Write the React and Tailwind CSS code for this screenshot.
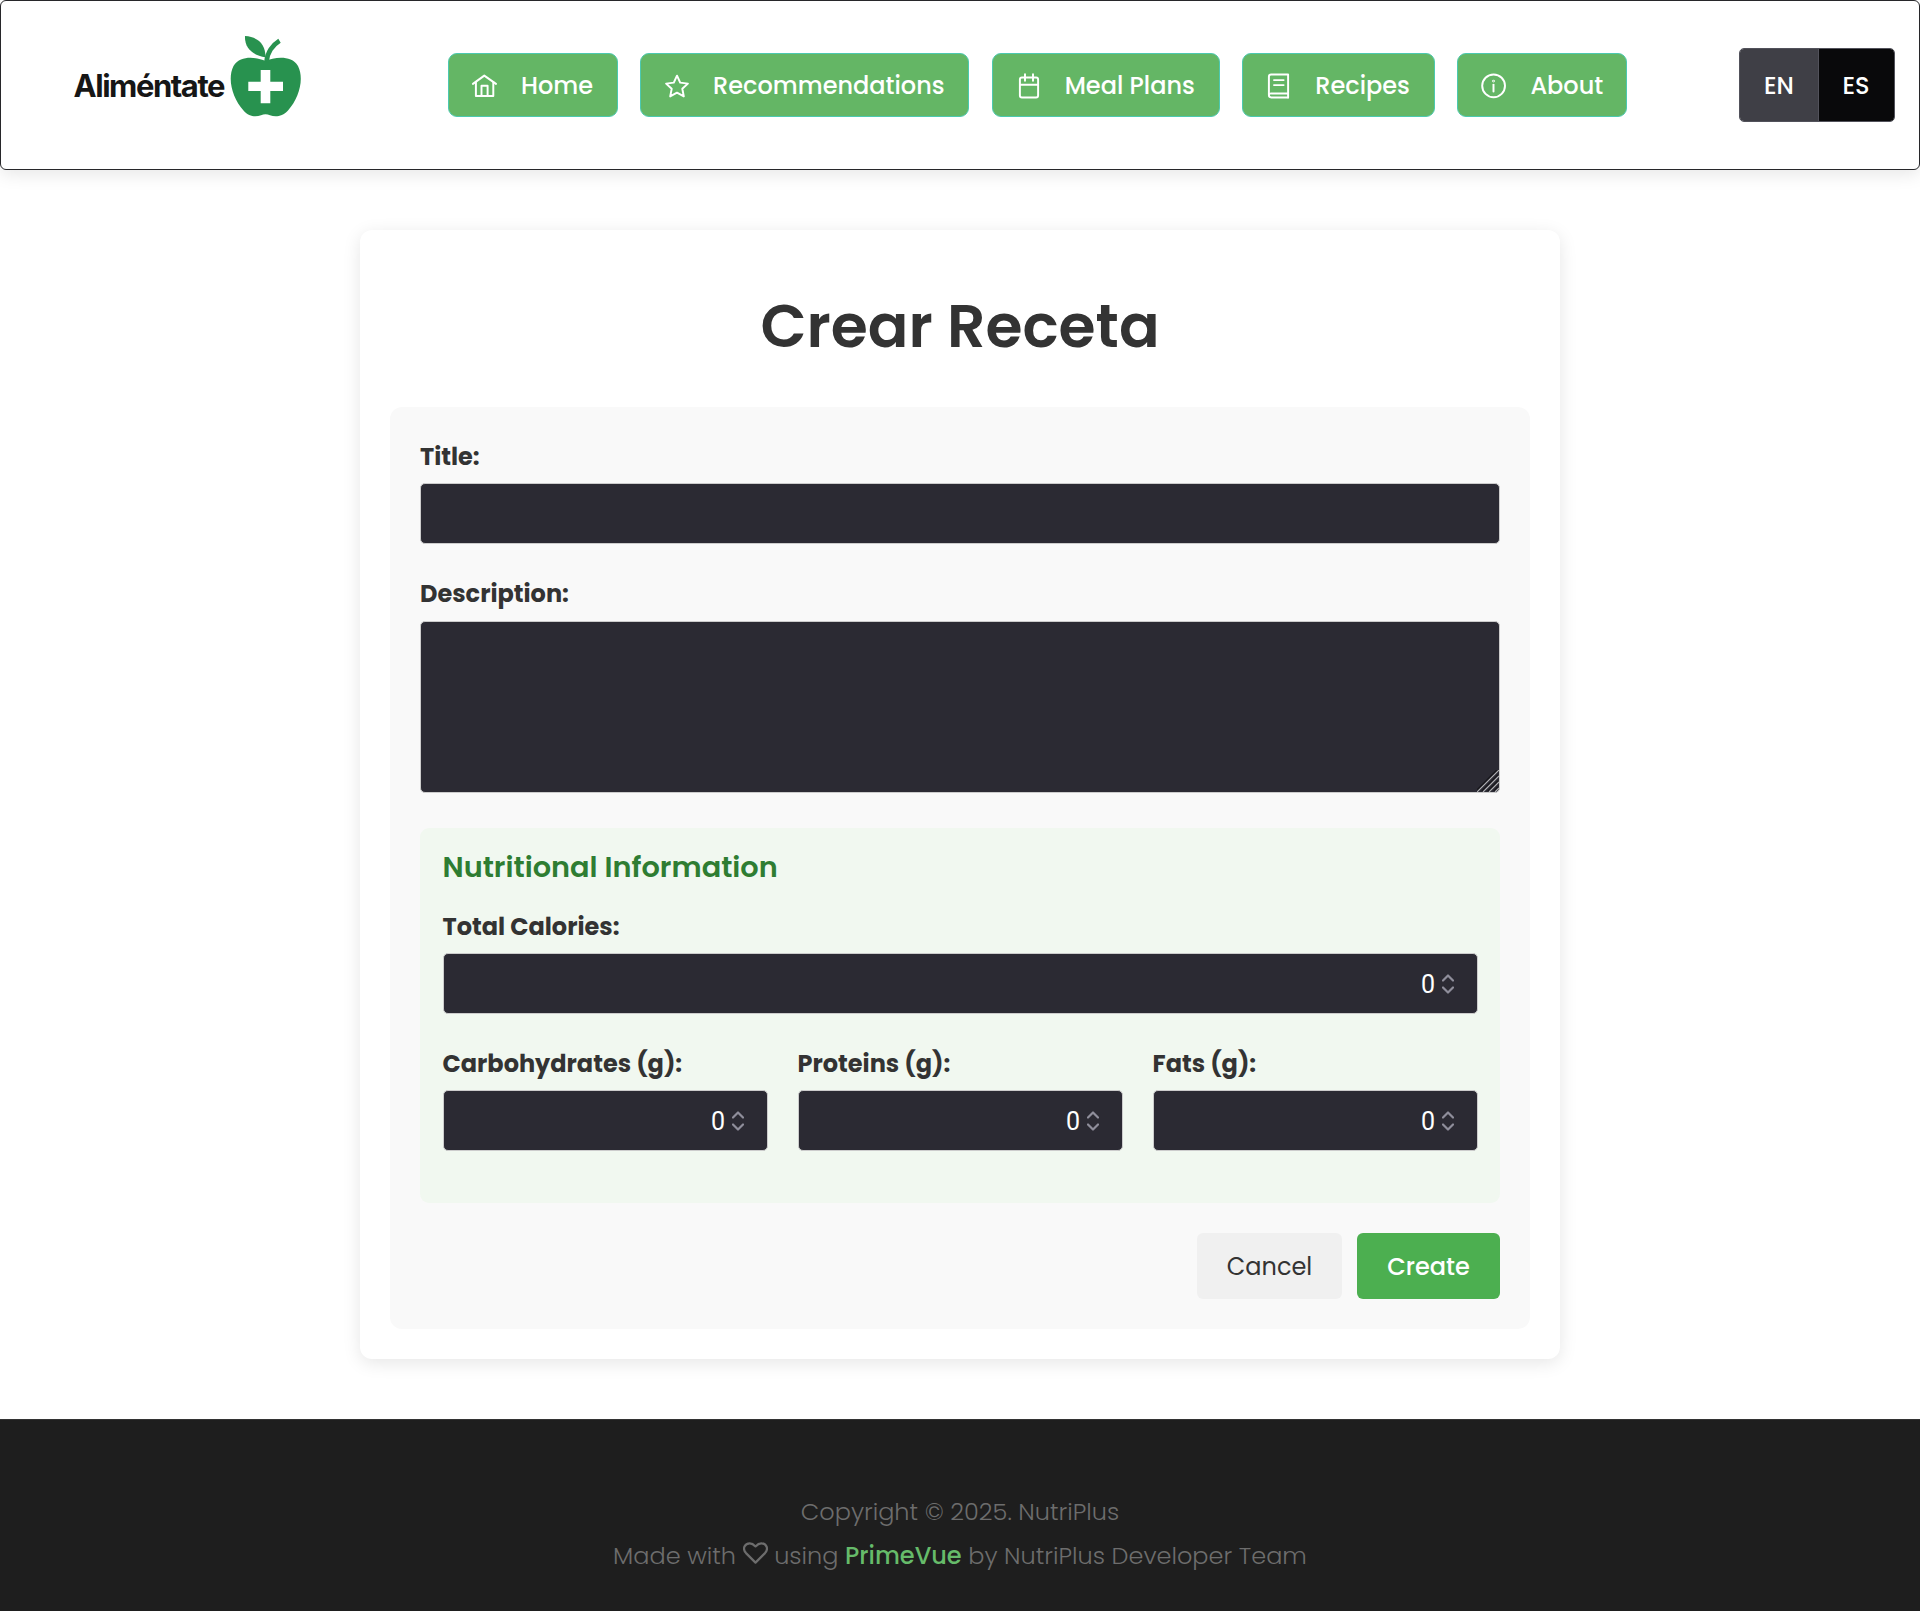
import React from "react";

const stroke = {
  fill: "none",
  stroke: "currentColor",
  strokeWidth: 1.95,
  strokeLinecap: "round",
  strokeLinejoin: "round",
};

function Icon({ children }) {
  return (
    <svg viewBox="0 0 25 25" className="h-[25px] w-[25px] shrink-0 overflow-visible" {...stroke}>
      {children}
    </svg>
  );
}

const HomeIcon = () => (
  <Icon>
    <path d="M0.9 10.9 12.3 2.6 24 10.9" />
    <path d="M3.9 9v14h17.4V9" />
    <path d="M9.5 22.6V12.7h6.1v9.9" />
  </Icon>
);

const StarIcon = () => (
  <Icon>
    <path d="M13 2.7 16.2 9.6 23.9 10.6 18.3 15.8 19.8 23.4 13 19.7 6.2 23.4 7.7 15.8 2.1 10.6 9.8 9.6Z" />
  </Icon>
);

const CalendarIcon = () => (
  <Icon>
    <rect x="3.9" y="4.4" width="18.2" height="20" rx="2" />
    <path d="M4 11.8h18M9 1.2v6.6M17 1.2v6.6" />
  </Icon>
);

const BookIcon = () => (
  <Icon>
    <path d="M22.1 20.4V1.4H5.2a2.3 2.3 0 0 0-2.3 2.3v18.4a2.3 2.3 0 0 0 2.3 2.3h16.9" />
    <path d="M3 22.2a2 2 0 0 1 2.2-1.8h16.9v4" />
    <path d="M8 7.1h9.6M8 12.1h9.6" />
  </Icon>
);

const InfoIcon = () => (
  <Icon>
    <circle cx="12.6" cy="12.8" r="11.4" />
    <path d="M12.5 11.6v6.8" />
    <circle cx="12.5" cy="8" r="0.4" />
  </Icon>
);

function Logo() {
  return (
    <div className="flex items-start">
      <span className="mt-[31px] w-[151px] font-[Inter,sans-serif] text-[31px] leading-[38px] font-bold tracking-[-1.45px] text-[#161616]">
        Aliméntate
      </span>
      <svg viewBox="230 36 71 81" className="ml-[5.5px] h-[81px] w-[71px]">
        <path
          fill="#28924f"
          d="M265.5 61C257 57.500 241 54.500 233.500 66C227 79 232.500 98 243.500 110.500C249 117 256 117 261 115.200C264 113.800 267 113.800 270 115.200C275 117 282 117 288 110.500C299 98 304.500 79 298 66C291 54.500 274 57.500 265.500 61Z"
        />
        <path fill="#28924f" d="M245 36C259 37 265.500 45 265.500 57.300C252 55 244.500 48 245 36Z" />
        <path d="M266.500 62C267 53 272.500 45 279.500 40.700" fill="none" stroke="#28924f" strokeWidth="4.600" />
        <path fill="#fff" d="M260.700 70h9.600v11.700h12.700v9.300h-12.700v12.300h-9.600v-12.300h-12.400v-9.300h12.400Z" />
      </svg>
    </div>
  );
}

const navItems = [
  { text: "Home", Glyph: HomeIcon, width: "w-[169.5px]" },
  { text: "Recommendations", Glyph: StarIcon, width: "w-[329px]" },
  { text: "Meal Plans", Glyph: CalendarIcon, width: "w-[228px]" },
  { text: "Recipes", Glyph: BookIcon, width: "w-[192.5px]" },
  { text: "About", Glyph: InfoIcon, width: "w-[170px]" },
];

function Header() {
  return (
    <header className="flex h-[170px] items-start rounded-[6px] border border-[#27272a] bg-white shadow-[0_4px_18px_rgba(0,0,0,0.1)]">
      <div className="w-[447px] pt-[35px] pl-[72.5px]">
        <Logo />
      </div>
      <nav className="mt-[52px] flex gap-[22.6px]">
        {navItems.map(({ text, Glyph, width }) => (
          <button
            key={text}
            className={`${width} flex h-[64px] items-center gap-[24px] rounded-[9px] border border-[#4cc9b0] bg-[#64b665] pl-[23px] text-2xl font-medium whitespace-nowrap text-white`}
          >
            <Glyph />
            <span className="pt-[2px]">{text}</span>
          </button>
        ))}
      </nav>
      <div className="mt-[47px] mr-[24px] ml-auto flex h-[74px] w-[156px] overflow-hidden rounded-[5px] border border-[#52525b] text-2xl font-medium text-white">
        <button className="w-[79px] border-r border-[#52525b] bg-[#3f3f46] pt-[2px]">EN</button>
        <button className="flex-1 bg-[#09090b] pt-[2px] pr-px">ES</button>
      </div>
    </header>
  );
}

const label = "block h-[38px] whitespace-nowrap text-2xl leading-[40px] font-bold text-[#333]";
const field = "rounded-[5px] border border-[#ccc] bg-[#2b2a33] text-white outline-none";

function NumberField() {
  return (
    <div className={`${field} mt-2 flex h-[61px] items-center justify-end pr-[22.5px]`}>
      <span className="pt-[2px] font-[Roboto,sans-serif] text-[25px] leading-none">0</span>
      <svg viewBox="0 0 12 20" className="ml-[7px] h-[20px] w-[12px]" fill="none" stroke="#8f8e9b" strokeWidth="2.2" strokeLinecap="round" strokeLinejoin="round">
        <path d="M1 6.500 6 1.500 11 6.500M1 13.500 6 18.500 11 13.500" />
      </svg>
    </div>
  );
}

function RecipeForm() {
  return (
    <form className="rounded-xl bg-[#f9f9f9] p-[30px]">
      <div className="mb-[30px]">
        <label className={label}>Title:</label>
        <input className={`${field} mt-2 block h-[61px] w-full px-4`} />
      </div>
      <div className="mb-[35px]">
        <label className={label}>Description:</label>
        <div className="relative mt-[9px]">
          <textarea className={`${field} block h-[172px] w-full resize-none px-4`} />
          <svg viewBox="0 0 22 22" className="absolute right-[1px] bottom-[1px] h-[22px] w-[22px]" fill="none">
            <path stroke="#17161b" strokeWidth="1.500" d="M-1 21 21-1M5 21 21 5M11 21 21 11M17 21 21 17" />
            <path stroke="#b4b4b8" strokeWidth="1.1" d="M0 22 22 0M6 22 22 6M12 22 22 12M18 22 22 18" />
          </svg>
        </div>
      </div>
      <section className="rounded-[9px] bg-[#f1f8f0] px-[22.5px] pt-[22px] pb-[52px]">
        <h3 className="mb-[23px] h-[34px] text-[28.8px] leading-[34px] font-semibold text-[#2e7d32]">
          Nutritional Information
        </h3>
        <div className="mb-[30px]">
          <label className={label}>Total Calories:</label>
          <NumberField />
        </div>
        <div className="grid grid-cols-3 gap-[30px]">
          <div>
            <label className={label}>Carbohydrates (g):</label>
            <NumberField />
          </div>
          <div>
            <label className={label}>Proteins (g):</label>
            <NumberField />
          </div>
          <div>
            <label className={label}>Fats (g):</label>
            <NumberField />
          </div>
        </div>
      </section>
      <div className="mt-[30px] flex justify-end gap-[15px]">
        <button type="button" className="h-[66px] w-[145px] rounded-[6px] bg-[#f0f0f0] pt-[2px] text-2xl text-[#333]">
          Cancel
        </button>
        <button type="button" className="h-[66px] w-[143px] rounded-[6px] bg-[#4caf50] pt-[2px] text-2xl font-medium text-white">
          Create
        </button>
      </div>
    </form>
  );
}

function Footer() {
  return (
    <footer className="h-[192px] border-t border-[#333] bg-[#1e1e1e] pt-[70px] text-center text-2xl leading-[44px] font-light text-[#6d6d6d]">
      <p>Copyright © 2025. NutriPlus</p>
      <p>
        Made with{" "}
        <svg viewBox="0 0 25 22" className="inline-block h-[22px] w-[25px] align-baseline" fill="none" stroke="currentColor" strokeWidth="2.2" strokeLinejoin="round">
          <path d="M12.500 20.600 3 11.100C-1 6.600 1.700 1.300 6.800 1.300C9.200 1.300 10.700 2.500 12.500 4.400C14.300 2.500 15.800 1.300 18.200 1.300C23.300 1.300 26 6.600 22 11.100Z" />
        </svg>{" "}
        using <a className="font-medium text-[#66bb6a]">PrimeVue</a> by NutriPlus Developer Team
      </p>
    </footer>
  );
}

export default function App() {
  return (
    <div className="min-h-[1611px] bg-white font-[Poppins,Inter,sans-serif]">
      <Header />
      <main className="mx-auto mt-[60px] mb-[60px] w-[1200px] rounded-xl bg-white p-[30px] shadow-[0_4px_18px_rgba(0,0,0,0.1)]">
        <h1 className="mb-[15px] h-[132px] text-center text-[60px] leading-[132px] font-semibold text-[#333]">
          Crear Receta
        </h1>
        <RecipeForm />
      </main>
      <Footer />
    </div>
  );
}
